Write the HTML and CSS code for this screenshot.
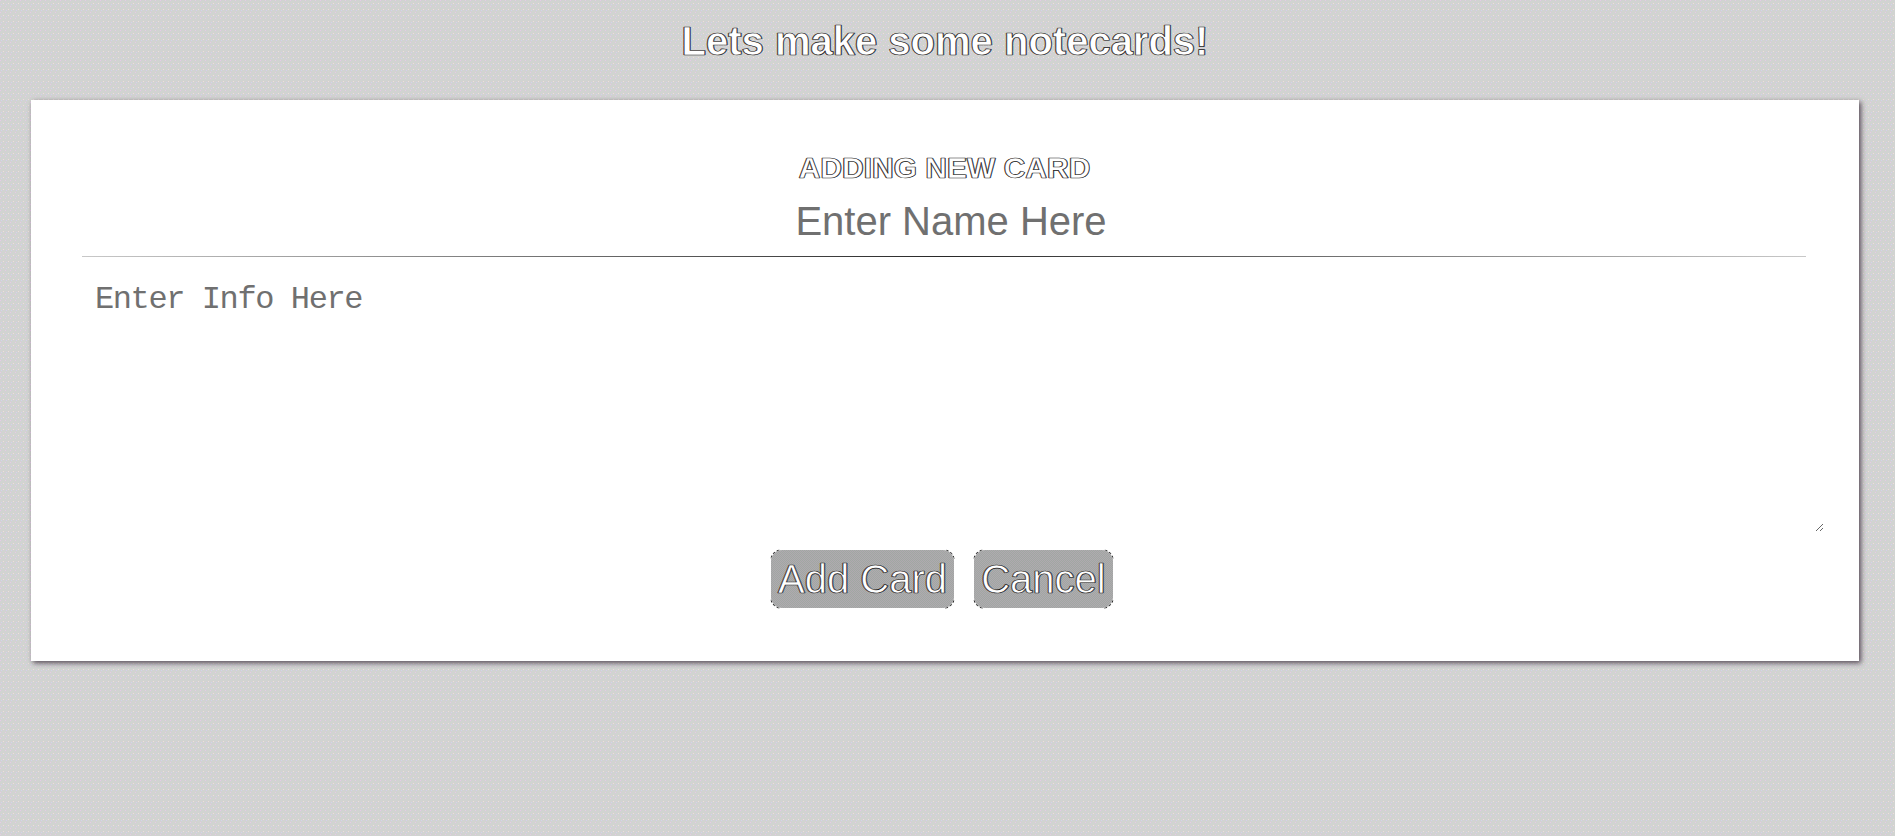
FILE: index.html
```html
<!DOCTYPE html>
<html lang="en">
<head>
<meta charset="utf-8">
<title>Notecards</title>
<link rel="stylesheet" href="styles.css">
</head>
<body>
<h1 class="title">Lets make some notecards!</h1>
<form class="card">
  <h2 class="card-heading">ADDING NEW CARD</h2>
  <input class="name" type="text" placeholder="Enter Name Here">
  <div class="rule"></div>
  <textarea class="info" placeholder="Enter Info Here"></textarea>
  <div class="actions">
    <button class="btn btn-add" type="button">Add Card</button>
    <button class="btn btn-cancel" type="button">Cancel</button>
  </div>
</form>
</body>
</html>
```

FILE: styles.css
```css
* { box-sizing: border-box; }
body {
  margin: 0;
  height: 836px;
  overflow: hidden;
  /* fine staggered speckle */
  background:
    conic-gradient(from 270deg at 1px 1px, #e6c8e8 90deg, transparent 0) 0 0 / 5px 6px,
    conic-gradient(from 270deg at 1px 1px, #f0dcdc 90deg, transparent 0) 3px 3px / 5px 6px,
    conic-gradient(from 270deg at 1px 1px, #d4d0ee 90deg, transparent 0) 1px 4px / 5px 6px,
    #d1d3d1;
  font-family: "Liberation Sans", Arial, sans-serif;
}
.title, .card-heading, .btn {
  color: #fff;
  -webkit-text-stroke: 0.6px #222;
  text-shadow: -0.7px 0 0 #60300c, 0.7px 0 0 #0c3464;
}
.title {
  margin: 0;
  padding: 18px 5px 0 0;
  height: 100px;
  font-size: 40px;
  line-height: 46px;
  text-align: center;
}
.card {
  display: flex;
  flex-direction: column;
  margin: 0 36px 0 31px;
  height: 561px;
  padding: 50px 35px 0 51px;
  background: #fff;
  box-shadow: 2px 2px 5px #584c58;
}
.card-heading {
  margin: 0 17px 0 0;
  font-size: 30px;
  line-height: 36px;
  text-align: center;
}
.name {
  height: 70px;
  margin: 0 4px 0 0;
  padding: 1px 0 0;
  border: 0;
  background: none;
  font: 40px "Liberation Sans", Arial, sans-serif;
  text-align: center;
}
.name::placeholder, .info::placeholder { color: #707070; opacity: 1; }
.rule {
  flex: none;
  height: 1px;
  margin-right: 18px;
  background: linear-gradient(90deg, #c8c8c8, #282828 50%, #c8c8c8);
}
.info {
  height: 275px;
  padding: 23px 13px;
  border: 0;
  background: none;
  font: 32px/40px "Liberation Mono", monospace;
  letter-spacing: -1.4px;
}
.actions { display: flex; gap: 20px; margin: 18px 0 0 689px; }
.btn {
  position: relative;
  height: 58px;
  padding: 0;
  border: 0;
  border-radius: 11px;
  background: repeating-conic-gradient(#a0a8a2 0 25%, #b0a9b0 0 50%) 0 0 / 2px 2px;
  font: 40px/58px "Liberation Sans", Arial, sans-serif;
}
/* Dashed dark edge, visible on the rounded corners only */
.btn::after {
  content: "";
  position: absolute;
  inset: -1px;
  border: 1px dashed #222;
  border-radius: 12px;
  -webkit-mask:
    linear-gradient(#000, #000) 0 0 / 10px 10px no-repeat,
    linear-gradient(#000, #000) 100% 0 / 10px 10px no-repeat,
    linear-gradient(#000, #000) 0 100% / 10px 10px no-repeat,
    linear-gradient(#000, #000) 100% 100% / 10px 10px no-repeat;
}
.btn-add { width: 183px; }
.btn-cancel { width: 139px; }
```
